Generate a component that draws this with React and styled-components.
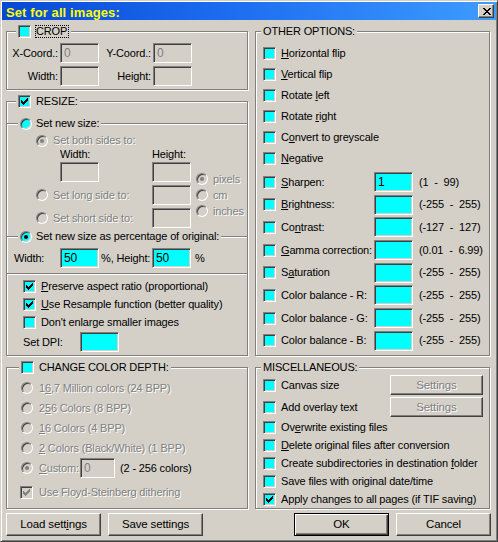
import React from 'react';
import styled, { createGlobalStyle } from 'styled-components';

const Global = createGlobalStyle`
  html, body { margin: 0; padding: 0; background: #d4d0c8; }
  body {
    font-family: "Liberation Sans", Arial, sans-serif;
    font-size: 11px;
    line-height: 13px;
    letter-spacing: -0.15px;
    color: #000;
  }
  * { box-sizing: border-box; }
`;

const FACE = '#d4d0c8';
const CYAN = '#00ffff';

const Window = styled.div`
  width: 498px;
  height: 542px;
  background: ${FACE};
  border: 1px solid;
  border-color: ${FACE} #404040 #404040 ${FACE};
  box-shadow: inset 1px 1px #fff, inset -1px -1px #808080;
  padding: 1px;
  display: flex;
  flex-direction: column;
  overflow: hidden;
`;

const TitleBar = styled.div`
  flex: none;
  height: 18px;
  background: linear-gradient(90deg, #0848d6 0%, #1c6cf0 45%, #3d9cff 100%);
  display: flex;
  align-items: center;
  justify-content: space-between;
  padding: 0 2px 0 4px;
`;

const TitleText = styled.span`
  color: #ffff00;
  font-weight: bold;
  font-size: 13px;
  letter-spacing: 0.1px;
  padding-top: 2px;
`;

const CloseButton = styled.div`
  width: 16px;
  height: 14px;
  background: ${FACE};
  border: 1px solid;
  border-color: #fff #404040 #404040 #fff;
  box-shadow: inset -1px -1px #808080, inset 1px 1px ${FACE};
  display: flex;
  align-items: center;
  justify-content: center;
  padding-left: 1px;
`;

const Body = styled.div`
  display: flex;
  gap: 7px;
  padding: 11px 0 0 4px;
`;

const Column = styled.div`
  flex: none;
  width: ${(p) => p.$w}px;
  display: flex;
  flex-direction: column;
`;

const GroupBox = styled.div`
  flex: none;
  height: ${(p) => p.$h}px;
  margin-bottom: ${(p) => p.$mb}px;
  border: 1px solid #808080;
  box-shadow: inset 1px 1px #fff, 1px 1px #fff;
  display: flex;
  flex-direction: column;
`;

const Legend = styled.div`
  align-self: flex-start;
  flex: none;
  height: 13px;
  margin: -7px 0 0 ${(p) => p.$ml}px;
  padding: 0 2px;
  background: ${FACE};
  display: flex;
  align-items: center;
  gap: ${(p) => (p.$gap != null ? p.$gap : 5)}px;
  white-space: nowrap;
`;

const Section = styled.div`
  flex: ${(p) => (p.$fill ? 1 : 'none')};
  margin-top: ${(p) => p.$mt || 0}px;
  padding-bottom: ${(p) => p.$pb || 0}px;
  border-top: 1px solid #808080;
  box-shadow: inset 0 1px #fff;
  display: flex;
  flex-direction: column;
`;

const Text = styled.span`
  white-space: pre;
  color: ${(p) => (p.$disabled ? '#808080' : '#000')};
  text-shadow: ${(p) => (p.$disabled ? '1px 1px #fff' : 'none')};
`;

const Focus = styled.span`
  border: 1px dotted #000;
  padding: 0 1px 0 0;
  line-height: 11px;
`;

const U = styled.span`
  text-decoration: underline;
`;

const Field = styled.div`
  flex: none;
  width: ${(p) => p.$w || 39}px;
  height: 20px;
  border: 1px solid;
  border-color: #808080 #fff #fff #808080;
  box-shadow: inset 1px 1px #404040, inset -1px -1px ${FACE};
  background: ${(p) => (p.$disabled ? FACE : CYAN)};
  color: ${(p) => (p.$disabled ? '#808080' : '#000')};
  display: flex;
  align-items: center;
  padding: 1px 0 0 3px;
  font-size: 12px;
`;

const BoxMark = styled.span`
  flex: none;
  width: 13px;
  height: 13px;
  border: 1px solid;
  border-color: #808080 #fff #fff #808080;
  box-shadow: inset 1px 1px #404040, inset -1px -1px ${FACE};
  background: ${(p) => (p.$disabled ? FACE : CYAN)};
  display: flex;
  align-items: center;
  justify-content: center;
  margin-left: ${(p) => p.$ml || 0}px;
`;

const RadioMark = styled.span`
  flex: none;
  width: 12px;
  height: 12px;
  border-radius: 50%;
  border: 1px solid;
  border-color: #808080 #fff #fff #808080;
  box-shadow: inset 1px 1px #404040, inset -1px -1px ${FACE};
  background: ${(p) => (p.$disabled ? FACE : CYAN)};
  display: flex;
  align-items: center;
  justify-content: center;
`;

const Dot = styled.span`
  width: 4px;
  height: 4px;
  border-radius: 50%;
  background: ${(p) => (p.$disabled ? '#808080' : '#000')};
`;

const CheckMark = ({ color }) => (
  <svg width="7" height="7" viewBox="0 0 7 7" shapeRendering="crispEdges">
    <path
      fill={color}
      d="M0 2h1v3h-1z M1 3h1v3h-1z M2 4h1v3h-1z M3 3h1v3h-1z M4 2h1v3h-1z M5 1h1v3h-1z M6 0h1v3h-1z"
    />
  </svg>
);

const CloseGlyph = () => (
  <svg width="8" height="7" viewBox="0 0 8 7" shapeRendering="crispEdges">
    <path
      fill="#000"
      d="M0 0h2v1h-2z M6 0h2v1h-2z M1 1h2v1h-2z M5 1h2v1h-2z M2 2h4v1h-4z M3 3h2v1h-2z M2 4h4v1h-4z M1 5h2v1h-2z M5 5h2v1h-2z M0 6h2v1h-2z M6 6h2v1h-2z"
    />
  </svg>
);

const Check = ({ checked, disabled, ml }) => (
  <BoxMark $disabled={disabled} $ml={ml}>
    {checked && <CheckMark color={disabled ? '#808080' : '#000'} />}
  </BoxMark>
);

const Radio = ({ checked, disabled }) => (
  <RadioMark $disabled={disabled}>{checked && <Dot $disabled={disabled} />}</RadioMark>
);

const Row = styled.div`
  flex: none;
  display: flex;
  align-items: center;
  height: ${(p) => p.$h || 13}px;
  gap: ${(p) => (p.$gap != null ? p.$gap : 5)}px;
  margin-top: ${(p) => p.$mt || 0}px;
  padding-left: ${(p) => p.$pl || 0}px;
  white-space: nowrap;
`;

/* ---------- CROP ---------- */
const CropGrid = styled.div`
  display: grid;
  grid-template-columns: 53px 39px 54px 39px;
  grid-auto-rows: 20px;
  row-gap: 3px;
  margin-top: 5px;
  align-items: center;
`;

const RightLabel = styled.span`
  text-align: right;
  padding-right: 2px;
  white-space: nowrap;
`;

/* ---------- RESIZE ---------- */
const SizeBody = styled.div`
  display: flex;
  margin-top: 4px;
  padding-left: 29px;
`;

const SizeGrid = styled.div`
  flex: none;
  width: 155px;
  display: grid;
  grid-template-columns: 24px 92px 39px;
  grid-template-rows: 13px 15px 20px 23px 23px;
  align-items: center;
`;

const SpanCell = styled.div`
  grid-column: ${(p) => p.$col};
  align-self: ${(p) => p.$align || 'center'};
  display: flex;
  align-items: center;
  gap: 5px;
  white-space: nowrap;
  height: ${(p) => (p.$h ? `${p.$h}px` : 'auto')};
`;

const UnitStack = styled.div`
  display: flex;
  flex-direction: column;
  margin: 37px 0 0 5px;
`;

const PercentGrid = styled.div`
  display: grid;
  grid-template-columns: 46px 39px 53px 39px auto;
  height: 20px;
  align-items: center;
  margin-top: 5px;
  padding-left: 7px;
  white-space: nowrap;
`;

const PadLeft = styled.span`
  padding-left: ${(p) => p.$pl}px;
  white-space: nowrap;
`;

const OptionList = styled.div`
  display: flex;
  flex-direction: column;
  gap: ${(p) => p.$gap || 0}px;
  padding-top: ${(p) => p.$pt || 0}px;
  padding-left: ${(p) => p.$pl || 0}px;
`;

const FixedLabel = styled.span`
  flex: none;
  width: ${(p) => p.$w}px;
  margin-left: ${(p) => p.$ml || 0}px;
  padding-left: ${(p) => p.$pl || 0}px;
  white-space: nowrap;
`;

/* ---------- OTHER ---------- */
const RangeText = styled.span`
  margin-left: 6px;
  white-space: pre;
`;

/* ---------- Buttons ---------- */
const Button = styled.div`
  flex: none;
  width: ${(p) => p.$w || 95}px;
  height: ${(p) => p.$h || 23}px;
  background: ${FACE};
  border: 1px solid;
  border-color: ${(p) => (p.$default ? '#000' : '#fff #404040 #404040 #fff')};
  box-shadow: ${(p) =>
    p.$default
      ? 'inset 1px 1px #fff, inset -1px -1px #404040, inset -2px -2px #808080'
      : `inset -1px -1px #808080, inset 1px 1px ${FACE}`};
  display: flex;
  align-items: center;
  justify-content: center;
  font-size: 11.5px;
  color: ${(p) => (p.$disabled ? '#808080' : '#000')};
  text-shadow: ${(p) => (p.$disabled ? '1px 1px #fff' : 'none')};
  margin-left: ${(p) => (p.$push ? 'auto' : '0')};
  margin-right: ${(p) => p.$mr || 0}px;
`;

const ButtonRow = styled.div`
  display: flex;
  gap: 7px;
  padding-left: ${(p) => p.$pl || 0}px;
`;

const otherSimple = [
  <><U>H</U>orizontal flip</>,
  <><U>V</U>ertical flip</>,
  <>Rotate <U>l</U>eft</>,
  <>Rotate <U>r</U>ight</>,
  <>C<U>o</U>nvert to greyscale</>,
  <><U>N</U>egative</>,
];

const otherInputs = [
  { label: <><U>S</U>harpen:</>, value: '1', range: '(1  -  99)' },
  { label: <><U>B</U>rightness:</>, value: '', range: '(-255  -  255)' },
  { label: <>Co<U>n</U>trast:</>, value: '', range: '(-127  -  127)' },
  { label: <><U>G</U>amma correction:</>, value: '', range: '(0.01  -  6.99)' },
  { label: <>S<U>a</U>turation</>, value: '', range: '(-255  -  255)' },
  { label: <>Color balance - R:</>, value: '', range: '(-255  -  255)' },
  { label: <>Color balance - G:</>, value: '', range: '(-255  -  255)' },
  { label: <>Color balance - B:</>, value: '', range: '(-255  -  255)' },
];

const depthOptions = [
  <>1<U>6</U>,7 Million colors (24 BPP)</>,
  <>2<U>5</U>6 Colors (8 BPP)</>,
  <><U>1</U>6 Colors (4 BPP)</>,
  <><U>2</U> Colors (Black/White) (1 BPP)</>,
];

const miscRows = [
  <>Ov<U>e</U>rwrite existing files</>,
  <><U>D</U>elete original files after conversion</>,
  <>Create subdirectories in destination <U>f</U>older</>,
  <>Save files with original date/time</>,
];

export default function App() {
  return (
    <>
      <Global />
      <Window>
        <TitleBar>
          <TitleText>Set for all images:</TitleText>
          <CloseButton>
            <CloseGlyph />
          </CloseButton>
        </TitleBar>
        <Body>
          <Column $w={242}>
            {/* CROP */}
            <GroupBox $h={59} $mb={11}>
              <Legend $ml={9} $gap={4}>
                <Check />
                <Focus>CROP</Focus>
              </Legend>
              <CropGrid>
                <RightLabel>X-Coord.:</RightLabel>
                <Field $disabled>0</Field>
                <RightLabel>Y-Coord.:</RightLabel>
                <Field $disabled>0</Field>
                <RightLabel>Width:</RightLabel>
                <Field $disabled />
                <RightLabel>Height:</RightLabel>
                <Field $disabled />
              </CropGrid>
            </GroupBox>

            {/* RESIZE */}
            <GroupBox $h={255} $mb={11}>
              <Legend $ml={9}>
                <Check checked />
                <Text>RESIZE:</Text>
              </Legend>
              <Section $mt={15} $pb={8}>
                <Legend $ml={11} $gap={4}>
                  <Radio />
                  <Text>Set new size:</Text>
                </Legend>
                <SizeBody>
                  <SizeGrid>
                    <SpanCell $col="1 / 4">
                      <Radio checked disabled />
                      <Text $disabled>Set both sides to:</Text>
                    </SpanCell>
                    <SpanCell $col="2 / 3">Width:</SpanCell>
                    <SpanCell $col="3 / 4">Height:</SpanCell>
                    <SpanCell $col="2 / 3">
                      <Field $disabled />
                    </SpanCell>
                    <SpanCell $col="3 / 4">
                      <Field $disabled />
                    </SpanCell>
                    <SpanCell $col="1 / 3" $align="end" $h={20}>
                      <Radio disabled />
                      <Text $disabled>Set long side to:</Text>
                    </SpanCell>
                    <SpanCell $col="3 / 4" $align="end">
                      <Field $disabled />
                    </SpanCell>
                    <SpanCell $col="1 / 3" $align="end" $h={20}>
                      <Radio disabled />
                      <Text $disabled>Set short side to:</Text>
                    </SpanCell>
                    <SpanCell $col="3 / 4" $align="end">
                      <Field $disabled />
                    </SpanCell>
                  </SizeGrid>
                  <UnitStack>
                    <Row $h={16}>
                      <Radio checked disabled />
                      <Text $disabled>pixels</Text>
                    </Row>
                    <Row $h={16}>
                      <Radio disabled />
                      <Text $disabled>cm</Text>
                    </Row>
                    <Row $h={16}>
                      <Radio disabled />
                      <Text $disabled>inches</Text>
                    </Row>
                  </UnitStack>
                </SizeBody>
              </Section>
              <Section $pb={5}>
                <Legend $ml={11} $gap={4}>
                  <Radio checked />
                  <Text>Set new size as percentage of original:</Text>
                </Legend>
                <PercentGrid>
                  <span>Width:</span>
                  <Field>50</Field>
                  <PadLeft $pl={2}>%, Height:</PadLeft>
                  <Field>50</Field>
                  <PadLeft $pl={4}>%</PadLeft>
                </PercentGrid>
              </Section>
              <Section $fill>
                <OptionList $pt={6} $pl={16} $gap={5}>
                  <Row>
                    <Check checked />
                    <Text>
                      <U>P</U>reserve aspect ratio (proportional)
                    </Text>
                  </Row>
                  <Row>
                    <Check checked />
                    <Text>
                      <U>U</U>se Resample function (better quality)
                    </Text>
                  </Row>
                  <Row>
                    <Check />
                    <Text>Don't enlarge smaller images</Text>
                  </Row>
                  <Row $h={20} $gap={0} $mt={-2}>
                    <FixedLabel $w={57}>Set DPI:</FixedLabel>
                    <Field />
                  </Row>
                </OptionList>
              </Section>
            </GroupBox>

            {/* COLOR DEPTH */}
            <GroupBox $h={142} $mb={4}>
              <Legend $ml={12}>
                <Check />
                <Text>CHANGE COLOR DEPTH:</Text>
              </Legend>
              <OptionList $pt={4} $pl={14}>
                {depthOptions.map((o, i) => (
                  <Row key={i} $h={20} $gap={6}>
                    <Radio disabled />
                    <Text $disabled>{o}</Text>
                  </Row>
                ))}
                <Row $h={20} $gap={0}>
                  <Radio checked disabled />
                  <FixedLabel $w={47} $pl={6}>
                    <Text $disabled>
                      <U>C</U>ustom:
                    </Text>
                  </FixedLabel>
                  <Field $disabled $w={35}>
                    0
                  </Field>
                  <PadLeft $pl={5}>(2 - 256 colors)</PadLeft>
                </Row>
                <Row $mt={8} $gap={6}>
                  <Check checked disabled ml={-1} />
                  <Text $disabled>Use Floyd-Steinberg dithering</Text>
                </Row>
              </OptionList>
            </GroupBox>

            <ButtonRow>
              <Button>
                Load sett<U>i</U>ngs
              </Button>
              <Button>Save settings</Button>
            </ButtonRow>
          </Column>

          <Column $w={235}>
            {/* OTHER OPTIONS */}
            <GroupBox $h={325} $mb={11}>
              <Legend $ml={5}>
                <Text>OTHER OPTIONS:</Text>
              </Legend>
              <OptionList $pt={5} $pl={7}>
                {otherSimple.map((o, i) => (
                  <Row key={i} $h={21}>
                    <Check />
                    <Text>{o}</Text>
                  </Row>
                ))}
              </OptionList>
              <OptionList $pt={3} $pl={7} $gap={2.7}>
                {otherInputs.map((o, i) => (
                  <Row key={i} $h={20} $gap={0}>
                    <Check />
                    <FixedLabel $w={93} $ml={5}>
                      {o.label}
                    </FixedLabel>
                    <Field>{o.value}</Field>
                    <RangeText>{o.range}</RangeText>
                  </Row>
                ))}
              </OptionList>
            </GroupBox>

            {/* MISC */}
            <GroupBox $h={142} $mb={4}>
              <Legend $ml={5}>
                <Text>MISCELLANEOUS:</Text>
              </Legend>
              <OptionList $pt={1} $pl={7} $gap={2}>
                <Row $h={20}>
                  <Check />
                  <Text>Canvas size</Text>
                  <Button $disabled $w={93} $h={20} $push $mr={6}>
                    Settings
                  </Button>
                </Row>
                <Row $h={20}>
                  <Check />
                  <Text>Add overlay text</Text>
                  <Button $disabled $w={93} $h={20} $push $mr={6}>
                    Settings
                  </Button>
                </Row>
              </OptionList>
              <OptionList $pt={1} $pl={7}>
                {miscRows.map((o, i) => (
                  <Row key={i} $h={18}>
                    <Check />
                    <Text>{o}</Text>
                  </Row>
                ))}
                <Row $h={18}>
                  <Check checked />
                  <Text>Apply changes to all pages (if TIF saving)</Text>
                </Row>
              </OptionList>
            </GroupBox>

            <ButtonRow $pl={39}>
              <Button $default>OK</Button>
              <Button>Cancel</Button>
            </ButtonRow>
          </Column>
        </Body>
      </Window>
    </>
  );
}
